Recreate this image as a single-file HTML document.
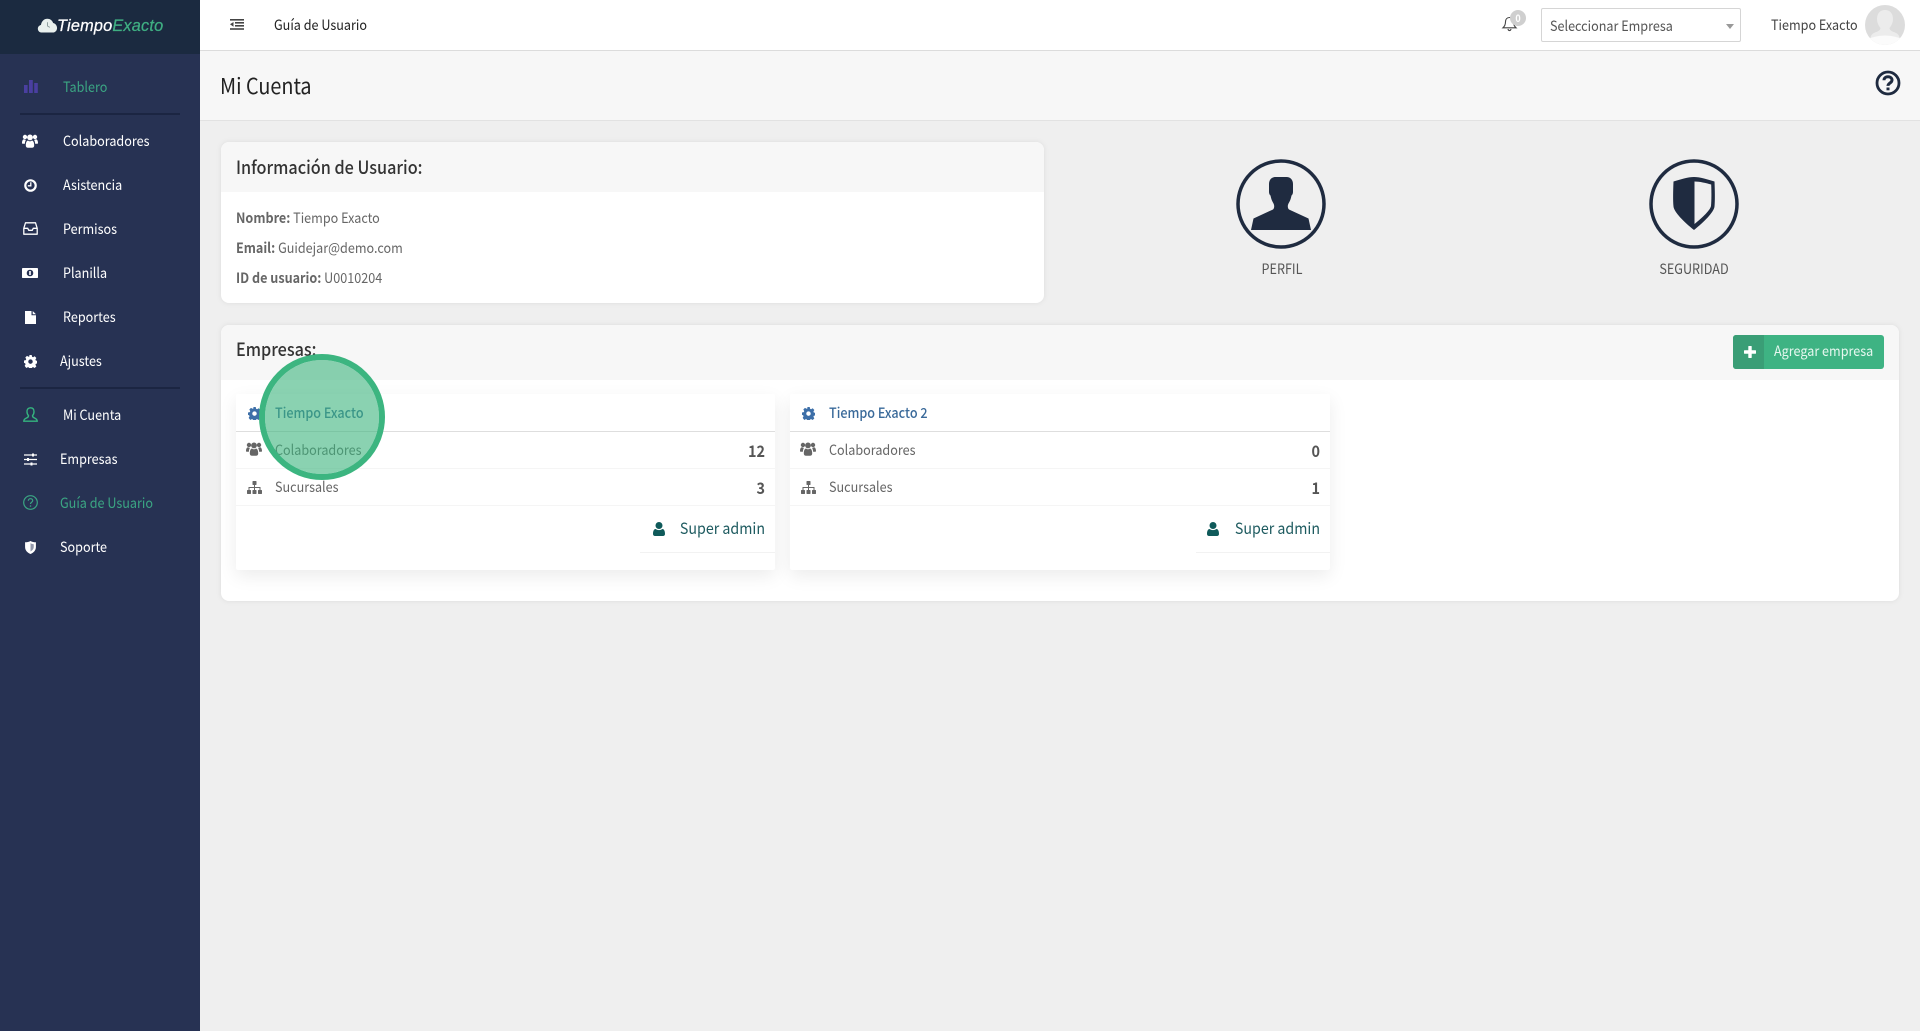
<!DOCTYPE html>
<html lang="es">
<head>
<meta charset="utf-8">
<title>Mi Cuenta</title>
<style>
*{box-sizing:border-box}
html,body{margin:0;padding:0}
body{width:1920px;height:1031px;overflow:hidden;position:relative;background:#efefef;font-family:"Noto Sans CJK JP","Liberation Sans",sans-serif;font-size:14px;color:#666}
.a{position:absolute}
.t{position:absolute;white-space:nowrap;line-height:20px;transform:scaleX(.9);transform-origin:0 50%}
.s{color:#fff}
.r{text-align:right;transform-origin:100% 50%}
.c{text-align:center;transform-origin:50% 50%}
svg{position:absolute;display:block;overflow:visible}
</style>
</head>
<body>
<svg width="0" height="0" style="position:absolute">
<defs>
<symbol id="users" viewBox="0 0 16 14"><circle cx="3" cy="3" r="2.2"/><circle cx="13" cy="3" r="2.2"/><circle cx="8" cy="3.4" r="2.9"/><path d="M0 9c0-2.6 1-3.8 2.2-3.8.6.5 1.2.7 1.8.7-.7 1-1.1 2.3-1.1 3.9H1C.4 9.800 0 9.500 0 9zM16 9c0-2.600-1-3.800-2.200-3.800-.6.5-1.200.7-1.800.7.7 1 1.100 2.300 1.100 3.900H15c.6 0 1-.3 1-.8z"/><path d="M3.800 11.500c0-3.700 1.300-5 2.300-5 .6.500 1.200.8 1.900.8s1.300-.3 1.900-.8c1 0 2.300 1.300 2.300 5 0 1.500-1 2.300-2.200 2.300H6c-1.200 0-2.200-.8-2.200-2.300z"/></symbol>
<symbol id="gear" viewBox="0 0 14 14"><path fill-rule="evenodd" d="M5.700 0h2.600l.4 1.900 1.100.5 1.700-1 1.800 1.800-1 1.700.5 1.100 1.900.4v2.600l-1.900.4-.5 1.100 1 1.700-1.800 1.800-1.700-1-1.100.5-.4 1.900H5.700l-.4-1.900-1.100-.5-1.700 1L.7 11.700l1-1.700-.5-1.100L0 8.500V5.900l1.900-.4.5-1.100-1-1.700 1.800-1.800 1.700 1 1.100-.5zM7 4.700a2.400 2.400 0 1 0 0 4.800 2.400 2.400 0 0 0 0-4.800z"/></symbol>
<symbol id="sitemap" viewBox="0 0 15 13"><rect x="5.500" y="0" width="4" height="4" rx=".6"/><rect x="0" y="9" width="4" height="4" rx=".6"/><rect x="5.500" y="9" width="4" height="4" rx=".6"/><rect x="11" y="9" width="4" height="4" rx=".6"/><path d="M7 4h1v2h5.500v3h-1V7H8v2H7V7H2.500v2h-1V6H7z"/></symbol>
<symbol id="user" viewBox="0 0 12 14"><circle cx="6" cy="3.500" r="3.500"/><path d="M0 12c0-3.500 1.200-5 2.700-5 1 .8 2.100 1.100 3.300 1.100S8.300 7.800 9.300 7c1.500 0 2.700 1.500 2.700 5 0 1.300-.9 2-2 2H2c-1.100 0-2-.7-2-2z"/></symbol>
</defs>
</svg>

<!-- Sidebar -->
<div class="a" style="left:0;top:0;width:200px;height:1031px;background:#273253"></div>
<div class="a" style="left:0;top:0;width:200px;height:54px;background:#1b2a40"></div>
<svg style="left:37px;top:18px" width="21" height="15" viewBox="0 0 21 16"><path fill="#e9f0ee" d="M4.500 15.500C2 15.500 .2 13.700.2 11.400c0-2 1.400-3.700 3.300-4C4.300 3.200 7 .8 10.300.8c2.900 0 5.300 1.800 6.200 4.500 2.400.5 4.200 2.800 4.200 5.300 0 2.700-2 4.900-4.600 4.900z"/><path fill="none" stroke="#8a9a9a" stroke-width="1" d="M10.500 4.500v4l2.500 1.500"/></svg>
<div class="t" style="left:57px;top:16px;font:italic 400 16.300px/20px 'Liberation Sans',sans-serif;color:#fff;letter-spacing:.2px;transform:none;-webkit-text-stroke:.25px currentColor">Tiempo<span style="color:#3fae82">Exacto</span></div>

<svg style="left:24px;top:80px" width="14" height="13" viewBox="0 0 14 13" fill="#4a3fa0"><rect x="0" y="5" width="3.600" height="8"/><rect x="5" y="0" width="3.800" height="13"/><rect x="10.200" y="3" width="3.600" height="10"/></svg>
<div class="t" style="left:63px;top:77px;color:#3ba583">Tablero</div>
<div class="a" style="left:20px;top:113px;width:160px;height:1.500px;background:#1b2542"></div>

<svg style="left:22px;top:134px;fill:#fff" width="16" height="14"><use href="#users"/></svg>
<div class="t s" style="left:63px;top:131px">Colaboradores</div>

<svg style="left:24px;top:179px" width="13" height="13" viewBox="0 0 13 13"><circle cx="6.500" cy="6.500" r="5.200" fill="none" stroke="#fff" stroke-width="2.200"/><path d="M6.800 3.300v3.500H3.800" fill="none" stroke="#fff" stroke-width="1.300"/></svg>
<div class="t s" style="left:63px;top:175px">Asistencia</div>

<svg style="left:23px;top:222px" width="15" height="13" viewBox="0 0 15 13"><path d="M2.500.8h10l1.700 5.500v5.900H.8V6.300z" fill="none" stroke="#fff" stroke-width="1.300" stroke-linejoin="round"/><path d="M1 6.300h3.700l1.100 2h3.400l1.100-2H14" fill="none" stroke="#fff" stroke-width="1.300"/></svg>
<div class="t s" style="left:63px;top:219px">Permisos</div>

<svg style="left:22px;top:268px" width="16" height="10" viewBox="0 0 16 10"><rect width="16" height="10" rx=".8" fill="#fff"/><circle cx="8" cy="5" r="3.300" fill="#273253"/><rect x="7.200" y="3" width="1.600" height="4" fill="#fff"/></svg>
<div class="t s" style="left:63px;top:263px">Planilla</div>

<svg style="left:25px;top:311px" width="11" height="13" viewBox="0 0 11 13"><path fill="#fff" d="M0 0h6.500v4.300H11V13H0zM7.700 0 11 3.200H7.700z"/></svg>
<div class="t s" style="left:63px;top:307px">Reportes</div>

<svg style="left:24px;top:355px;fill:#fff" width="13" height="13"><use href="#gear"/></svg>
<div class="t s" style="left:60px;top:351px">Ajustes</div>
<div class="a" style="left:20px;top:387px;width:160px;height:1.500px;background:#1b2542"></div>

<svg style="left:23px;top:407px" width="15" height="15" viewBox="0 0 15 15"><path d="M7.500.8c2.300 0 3.500 1.500 3.500 3.900 0 1.800-.7 3.100-1.500 4 0 1.200.6 1.700 2 2.300 1.700.7 2.700 1.400 2.700 3.200H.8c0-1.800 1-2.500 2.700-3.200 1.400-.6 2-1.100 2-2.300-.8-.9-1.500-2.200-1.500-4C4 2.300 5.200.8 7.500.8z" fill="none" stroke="#35b47f" stroke-width="1.400"/></svg>
<div class="t s" style="left:63px;top:405px">Mi Cuenta</div>

<svg style="left:24px;top:453px" width="13" height="13" viewBox="0 0 13 13"><path d="M0 2h13M0 6.500h13M0 11h13" stroke="#fff" stroke-width="1.200"/><rect x="8" y=".5" width="2" height="3" fill="#fff"/><rect x="3" y="5" width="2" height="3" fill="#fff"/><rect x="6.500" y="9.500" width="2" height="3" fill="#fff"/></svg>
<div class="t s" style="left:60px;top:449px">Empresas</div>

<svg style="left:23px;top:495px" width="15" height="15" viewBox="0 0 15 15"><circle cx="7.500" cy="7.500" r="6.800" fill="none" stroke="#3aa583" stroke-width="1.200"/><path d="M5.300 5.800c0-1.300 1-2.100 2.200-2.100s2.200.8 2.200 1.900c0 1.700-2.200 1.600-2.200 3.400" fill="none" stroke="#3aa583" stroke-width="1.200"/><circle cx="7.500" cy="11" r=".8" fill="#3aa583"/></svg>
<div class="t" style="left:60px;top:493px;color:#3ba583">Guía de Usuario</div>

<svg style="left:25px;top:541px" width="11" height="13" viewBox="0 0 10 12"><path fill="#fff" d="M5 0c1.500.8 3.200 1.200 5 1.200v4.300C10 8.700 7.800 10.800 5 12 2.200 10.800 0 8.700 0 5.500V1.200C1.800 1.200 3.500.8 5 0z"/><path fill="#9298ab" d="M5 2v7.700C6.700 8.800 8 7.300 8 5.400V3c-1.100 0-2.100-.4-3-1z"/></svg>
<div class="t s" style="left:60px;top:537px">Soporte</div>

<!-- Top bar -->
<div class="a" style="left:200px;top:0;width:1720px;height:51px;background:#fff;border-bottom:1px solid #dcdcdc"></div>
<svg style="left:230px;top:19px" width="14" height="11" viewBox="0 0 14 11" fill="#444"><rect width="14" height="1.600"/><rect x="5" y="3" width="9" height="1.600"/><rect x="5" y="6" width="9" height="1.600"/><rect y="9.200" width="14" height="1.600"/><path d="M3.500 3v4.700L0 5.300z"/></svg>
<div class="t" style="left:274px;top:15px;color:#222">Guía de Usuario</div>

<svg style="left:1502px;top:16px" width="15" height="16" viewBox="0 0 15 16"><path d="M7.500 1.500c-2.500 0-4 1.800-4 4.300 0 3-.9 4.600-2.500 6h13c-1.600-1.400-2.500-3-2.500-6 0-2.500-1.500-4.300-4-4.300zM6 13c.2 1 .8 1.600 1.500 1.600S8.800 14 9 13" fill="none" stroke="#444" stroke-width="1.100"/></svg>
<div class="a" style="left:1510px;top:10px;width:16px;height:16px;border-radius:50%;background:#cfcfcf"></div>
<div class="t c" style="left:1510px;top:8px;width:16px;font-size:10px;color:#fff;font-weight:700">0</div>

<div class="a" style="left:1541px;top:8px;width:200px;height:34px;background:#fff;border:1px solid #d5d5d5;border-radius:2px"></div>
<div class="t" style="left:1550px;top:16px;color:#555">Seleccionar Empresa</div>
<div class="a" style="left:1726px;top:24px;width:0;height:0;border-left:4.500px solid transparent;border-right:4.500px solid transparent;border-top:5px solid #999"></div>

<div class="t" style="left:1771px;top:15px;color:#444">Tiempo Exacto</div>
<svg style="left:1865px;top:5px" width="40" height="40" viewBox="0 0 40 40"><defs><clipPath id="av"><circle cx="20" cy="20" r="20"/></clipPath></defs><circle cx="20" cy="20" r="20" fill="#dcdcdc"/><g clip-path="url(#av)"><path fill="#ececec" d="M20 5c5 0 8 3.500 8 9 0 4-2 7-3.500 9 .2 2 1.500 3 5 4.300 3 1.200 4.500 2.500 5 5.700H5.500c.5-3.200 2-4.500 5-5.700 3.500-1.300 4.800-2.300 5-4.300C14 21 12 18 12 14c0-5.500 3-9 8-9z"/><path fill="#fbfbfb" d="M5 33c4-1 9-2.500 15-2.500S31 32 35 33v8H5z"/></g></svg>

<!-- Page header -->
<div class="a" style="left:200px;top:51px;width:1720px;height:70px;background:#f7f7f7;border-bottom:1px solid #e2e2e2"></div>
<div class="t" style="left:220px;top:70px;font-size:22px;line-height:30px;color:#222">Mi Cuenta</div>
<svg style="left:1875px;top:70px" width="26" height="26" viewBox="0 0 26 26"><circle cx="13" cy="13" r="11" fill="none" stroke="#1f2b40" stroke-width="2.800"/><path d="M9 10.300C9 8 10.800 6.800 13 6.800s4 1.300 4 3.300c0 3-4 2.800-4 5.800" fill="none" stroke="#1f2b40" stroke-width="3"/><rect x="11.500" y="17.500" width="3" height="2.800" fill="#1f2b40"/></svg>

<!-- Info card -->
<div class="a" style="left:221px;top:142px;width:823px;height:161px;background:#fff;border-radius:8px;box-shadow:0 0 6px rgba(0,0,0,.08);overflow:hidden"><div style="height:50px;background:#f7f7f7"></div></div>
<div class="t" style="left:236px;top:157px;font-size:18px;font-weight:500;line-height:20px;color:#333">Información de Usuario:</div>
<div class="t" style="left:236px;top:208px"><b style="font-weight:700">Nombre:</b> Tiempo Exacto</div>
<div class="t" style="left:236px;top:238px"><b style="font-weight:700">Email:</b> Guidejar@demo.com</div>
<div class="t" style="left:236px;top:268px"><b style="font-weight:700">ID de usuario:</b> U0010204</div>

<!-- Profile / security -->
<svg style="left:1236px;top:159px" width="90" height="90" viewBox="0 0 90 90"><circle cx="45" cy="45" r="43" fill="none" stroke="#1f2b40" stroke-width="3.500"/><path fill="#1f2b40" d="M39.500 18h11c4 0 6.500 3 6.500 7v8c0 1.500-.7 3-1.500 3.500-.5 3-1.500 5.500-3 8-1 2-1 4.500.5 6l19.500 9 2.500 11.500H15l2.500-11.500 19.500-9c1.500-1.500 1.500-4 .5-6-1.500-2.500-2.500-5-3-8-.8-.5-1.500-2-1.500-3.500v-8c0-4 2.500-7 6.500-7z"/></svg>
<div class="t c" style="left:1232px;top:259px;width:100px;color:#555">PERFIL</div>

<svg style="left:1649px;top:159px" width="90" height="90" viewBox="0 0 90 90"><circle cx="45" cy="45" r="43" fill="none" stroke="#1f2b40" stroke-width="3.500"/><path fill="#1f2b40" d="M45 18c-6 0-14 2.500-20.500 4.500-.4 9-.6 19 0 25C25 53 35 63 45 71c10-8 20-18 20.500-23.500.6-6 .4-16 0-25C59 20.500 51 18 45 18z"/><path fill="#efefef" d="M45.500 22.500v42.500c8-6.500 15.800-14 16.500-18 .5-5.500.5-14 .2-21.500-5.400-1.500-11.500-3-16.700-3z"/></svg>
<div class="t c" style="left:1634px;top:259px;width:120px;color:#555">SEGURIDAD</div>

<!-- Empresas card -->
<div class="a" style="left:221px;top:325px;width:1678px;height:276px;background:#fff;border-radius:8px;box-shadow:0 0 6px rgba(0,0,0,.08);overflow:hidden"><div style="height:55px;background:#f7f7f7"></div></div>
<div class="t" style="left:236px;top:339px;font-size:18px;font-weight:500;color:#333">Empresas:</div>

<div class="a" style="left:1733px;top:335px;width:151px;height:34px;background:#3eb383;border-radius:3px;overflow:hidden"><div style="width:31px;height:34px;background:#3a9e76"></div></div>
<svg style="left:1744px;top:346px" width="12" height="12" viewBox="0 0 12 12" fill="#fff"><rect x="4.300" y="0" width="3.400" height="12" rx=".5"/><rect x="0" y="4.300" width="12" height="3.400" rx=".5"/></svg>
<div class="t" style="left:1774px;top:341px;color:#e6f7ef">Agregar empresa</div>

<!-- Card 1 -->
<div class="a" style="left:236px;top:394px;width:539px;height:176px;background:#fff;box-shadow:0 6px 18px rgba(0,0,0,.08);border-radius:2px"></div>
<div class="a" style="left:236px;top:431px;width:539px;height:1px;background:#dedede"></div>
<div class="a" style="left:236px;top:468px;width:539px;height:1px;background:#f5f5f5"></div>
<div class="a" style="left:236px;top:505px;width:539px;height:1px;background:#f5f5f5"></div>
<div class="a" style="left:640px;top:552px;width:135px;height:1px;background:#f2f2f2"></div>
<svg style="left:248px;top:407px;fill:#3d6fa8" width="13" height="13"><use href="#gear"/></svg>
<div class="t" style="left:275px;top:403px;color:#3a6a9a;font-weight:500">Tiempo Exacto</div>
<svg style="left:246px;top:442px;fill:#666" width="16" height="14"><use href="#users"/></svg>
<div class="t" style="left:275px;top:440px">Colaboradores</div>
<svg style="left:247px;top:481px;fill:#666" width="15" height="13"><use href="#sitemap"/></svg>
<div class="t" style="left:275px;top:477px">Sucursales</div>
<div class="t r" style="left:700px;top:440px;width:65px;font-weight:700;font-size:16px;color:#555">12</div>
<div class="t r" style="left:700px;top:477px;width:65px;font-weight:700;font-size:16px;color:#555">3</div>
<svg style="left:653px;top:522px;fill:#0f5a5a" width="12" height="14"><use href="#user"/></svg>
<div class="t r" style="left:640px;top:518px;width:125px;font-size:15.800px;color:#1d5a5f">Super admin</div>

<!-- Card 2 -->
<div class="a" style="left:790px;top:394px;width:540px;height:176px;background:#fff;box-shadow:0 6px 18px rgba(0,0,0,.08);border-radius:2px"></div>
<div class="a" style="left:790px;top:431px;width:540px;height:1px;background:#dedede"></div>
<div class="a" style="left:790px;top:468px;width:540px;height:1px;background:#f5f5f5"></div>
<div class="a" style="left:790px;top:505px;width:540px;height:1px;background:#f5f5f5"></div>
<div class="a" style="left:1196px;top:552px;width:134px;height:1px;background:#f2f2f2"></div>
<svg style="left:802px;top:407px;fill:#3d6fa8" width="13" height="13"><use href="#gear"/></svg>
<div class="t" style="left:829px;top:403px;color:#3a6a9a;font-weight:500">Tiempo Exacto 2</div>
<svg style="left:800px;top:442px;fill:#666" width="16" height="14"><use href="#users"/></svg>
<div class="t" style="left:829px;top:440px">Colaboradores</div>
<svg style="left:801px;top:481px;fill:#666" width="15" height="13"><use href="#sitemap"/></svg>
<div class="t" style="left:829px;top:477px">Sucursales</div>
<div class="t r" style="left:1255px;top:440px;width:65px;font-weight:700;font-size:16px;color:#555">0</div>
<div class="t r" style="left:1255px;top:477px;width:65px;font-weight:700;font-size:16px;color:#555">1</div>
<svg style="left:1207px;top:522px;fill:#0f5a5a" width="12" height="14"><use href="#user"/></svg>
<div class="t r" style="left:1195px;top:518px;width:125px;font-size:15.800px;color:#1d5a5f">Super admin</div>

<!-- Highlight circle -->
<div class="a" style="left:259px;top:354px;width:126px;height:126px;border-radius:50%;border:6px solid #3cb580;background:rgba(60,180,125,.6);background-clip:padding-box"></div>
</body>
</html>
